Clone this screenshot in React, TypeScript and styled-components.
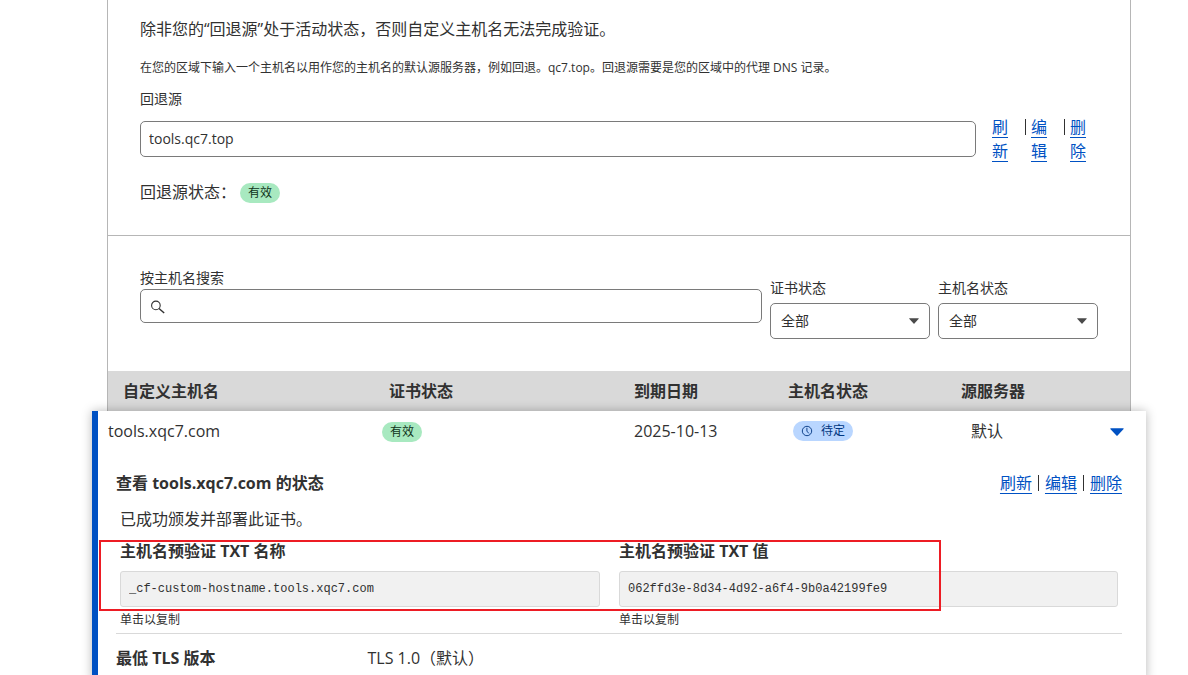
import React from "react";
import styled, { createGlobalStyle } from "styled-components";

const color = {
  text: "#313131",
  link: "#0051c3",
  cardBorder: "#b6b6b6",
  controlBorder: "#7a7a7a",
  rule: "#d9d9d9",
  headBg: "#d9d9d9",
  fieldBg: "#f1f1f1",
  mark: "#ed1c24",
};

const GlobalStyle = createGlobalStyle`
  *, *::before, *::after { box-sizing: border-box; }
  body {
    margin: 0;
    background: #fff;
    color: ${color.text};
    font-family: "Open Sans", "Noto Sans CJK SC", sans-serif;
    font-size: 16px;
    line-height: 24px;
  }
  input, select, button { font: inherit; color: inherit; }
`;

const Page = styled.div`
  height: 100vh;
  overflow: hidden;
  padding: 0 57px 0 107px;
`;

const Card = styled.main`
  min-height: 100%;
  border: solid ${color.cardBorder};
  border-width: 0 1px;
`;

const OriginSection = styled.section`
  padding: 17px 32px 31px;
  border-bottom: 1px solid ${color.cardBorder};
`;

const Lead = styled.p`
  margin: 0 0 18px;
`;

const Hint = styled.p`
  margin: 0 0 12px;
  font-size: 12px;
  line-height: 18px;
`;

const Label = styled.label<{ $gap?: number }>`
  display: block;
  margin-bottom: ${(p) => p.$gap ?? 0}px;
  font-size: 14px;
  line-height: 20px;
`;

const OriginRow = styled.div`
  display: flex;
  align-items: center;
  gap: 16px;
  margin-bottom: 17px;
`;

const TextInput = styled.input`
  flex: 1;
  min-width: 0;
  height: 36px;
  padding: 0 8px 2px;
  border: 1px solid ${color.controlBorder};
  border-radius: 5px;
  background: #fff;
  font-size: 14px;
`;

const StackedLinks = styled.div`
  display: flex;
  gap: 5px;
  width: 106px;
`;

const StackedItem = styled.span`
  display: flex;
  gap: 17px;
`;

const StackedText = styled.span`
  width: 16px;
`;

const Link = styled.a`
  color: ${color.link};
  text-decoration: underline;
  text-decoration-thickness: 1px;
  text-underline-offset: 4px;
  text-decoration-skip-ink: none;
`;

const Bar = styled.i`
  flex: none;
  width: 1px;
  height: 16px;
  margin-top: 4px;
  background: ${color.text};
`;

const StatusLine = styled.div`
  display: flex;
  align-items: center;
  gap: 4px;
`;

const Badge = styled.span<{ $tone: "ok" | "pending" }>`
  display: inline-flex;
  align-items: center;
  gap: 8px;
  height: 20px;
  margin-top: ${(p) => (p.$tone === "ok" ? 2 : 0)}px;
  padding: 0 8px;
  border-radius: 10px;
  font-size: 12px;
  line-height: 20px;
  background: ${(p) => (p.$tone === "ok" ? "#a8e9c0" : "#b9d6ff")};
  color: ${(p) => (p.$tone === "ok" ? "#0f3319" : "#003681")};
`;

const FilterSection = styled.section`
  display: flex;
  align-items: flex-start;
  gap: 8px;
  padding: 32px;
`;

const SearchField = styled.div`
  flex: 1;
  min-width: 0;
`;

const SearchBox = styled.div`
  display: flex;
  align-items: center;
  gap: 8px;
  height: 34px;
  padding: 2px 9px 0;
  border: 1px solid ${color.controlBorder};
  border-radius: 5px;
  svg { flex: none; }
`;

const SearchInput = styled.input`
  flex: 1;
  min-width: 0;
  border: 0;
  outline: 0;
  background: transparent;
  font-size: 14px;
`;

const SelectField = styled.div`
  width: 160px;
  padding-top: 10px;
`;

const SelectBox = styled.div`
  display: grid;
  align-items: center;
  > * { grid-area: 1 / 1; }
  svg {
    justify-self: end;
    margin-right: 11px;
    pointer-events: none;
  }
`;

const Select = styled.select`
  width: 100%;
  height: 36px;
  padding: 0 10px;
  border: 1px solid ${color.controlBorder};
  border-radius: 5px;
  appearance: none;
  background: #fff;
  font-size: 14px;
`;

const HostTable = styled.table`
  display: block;
`;

const Head = styled.thead`
  display: block;
  background: ${color.headBg};
`;

const HeadRow = styled.tr`
  display: grid;
  grid-template-columns: 266fr 245fr 154fr 173fr 169fr;
  padding-left: 15px;
`;

const HeadCell = styled.th`
  padding: 8px 0;
  text-align: left;
  font-weight: 700;
`;

const Panel = styled.tbody`
  display: block;
  position: relative;
  margin: 0 -16px;
  border-left: 6px solid ${color.link};
  background: #fff;
  box-shadow: 0 0 10px rgba(0, 0, 0, 0.28);
`;

const HostRow = styled.tr`
  display: grid;
  grid-template-columns: 274fr 252fr 159fr 178fr 135fr 40px;
  align-items: center;
  height: 40px;
  padding-left: 10px;
`;

const Cell = styled.td`
  display: flex;
  align-items: center;
  padding: 0;
`;

const ToggleButton = styled.button`
  display: flex;
  padding: 6px 4px 4px;
  border: 0;
  background: none;
  cursor: pointer;
`;

const DetailRow = styled.tr`
  display: block;
`;

const Detail = styled.td`
  display: block;
  padding: 20px 24px 12px 18px;
`;

const DetailHead = styled.div`
  display: flex;
  justify-content: space-between;
  margin-bottom: 12px;
`;

const Title = styled.h3`
  margin: 0;
  font-size: 16px;
  font-weight: 700;
`;

const InlineLinks = styled.div`
  display: flex;
  gap: 6px;
`;

const Issued = styled.p`
  margin: 0 4px 8px;
`;

const Records = styled.div`
  position: relative;
  display: grid;
  grid-template-columns: 1fr 1fr;
  margin: 0 4px 4px;
`;

const Highlight = styled.div`
  position: absolute;
  top: 1px;
  left: -21px;
  right: 177px;
  height: 71px;
  border: 2px solid ${color.mark};
  pointer-events: none;
`;

const Record = styled.div<{ $inset?: number }>`
  padding-right: ${(p) => p.$inset ?? 0}px;
`;

const RecordLabel = styled.label`
  display: block;
  margin-bottom: 8px;
  font-weight: 700;
`;

const RecordInput = styled.input`
  display: block;
  width: 100%;
  height: 36px;
  margin-bottom: 4px;
  padding: 0 8px;
  border: 1px solid ${color.rule};
  border-radius: 3px;
  background: ${color.fieldBg};
  && {
    font-family: "Liberation Mono", monospace;
    font-size: 12px;
  }
`;

const CopyHint = styled.small`
  display: block;
  font-size: 12px;
  line-height: 18px;
`;

const SettingRow = styled.div`
  display: grid;
  grid-template-columns: 1fr 3fr;
  padding-top: 12px;
  border-top: 1px solid ${color.rule};
`;

const SearchIcon = () => (
  <svg width="16" height="16" viewBox="0 0 16 16" fill="none" stroke="#313131" aria-hidden="true">
    <circle cx="5.9" cy="6.4" r="4.3" strokeWidth="1.1" />
    <path d="M9 9.4l5.2 4.6" strokeWidth="1.4" />
  </svg>
);

const Caret = ({ width, height, fill }: { width: number; height: number; fill: string }) => (
  <svg width={width} height={height} viewBox="0 0 14 8" preserveAspectRatio="none" fill={fill} aria-hidden="true">
    <path d="M0.3 1Q0 0.3 0.9 0.3H13.1Q14 0.3 13.6 1L7.6 7.4Q7 8 6.4 7.4Z" />
  </svg>
);

const ClockIcon = () => (
  <svg width="12" height="12" viewBox="0 0 12 12" fill="none" stroke="#003681" strokeWidth="0.9" aria-hidden="true">
    <circle cx="6" cy="6" r="4.7" />
    <path d="M5.9 2.8v3.3l1.9 2.3" />
  </svg>
);

const actions = ["刷新", "编辑", "删除"];
const columns = ["自定义主机名", "证书状态", "到期日期", "主机名状态", "源服务器"];
const filters = [
  { id: "cert-status", label: "证书状态" },
  { id: "host-status", label: "主机名状态" },
];
const records = [
  { id: "txt-name", label: "主机名预验证 TXT 名称", value: "_cf-custom-hostname.tools.xqc7.com", inset: 19 },
  { id: "txt-value", label: "主机名预验证 TXT 值", value: "062ffd3e-8d34-4d92-a6f4-9b0a42199fe9", inset: 0 },
];

export default function App() {
  return (
    <Page>
      <GlobalStyle />
      <Card>
        <OriginSection>
          <Lead>除非您的“回退源”处于活动状态，否则自定义主机名无法完成验证。</Lead>
          <Hint>
            在您的区域下输入一个主机名以用作您的主机名的默认源服务器，例如回退。qc7.top。回退源需要是您的区域中的代理 DNS 记录。
          </Hint>
          <Label htmlFor="origin" $gap={6}>回退源</Label>
          <OriginRow>
            <TextInput id="origin" defaultValue="tools.qc7.top" />
            <StackedLinks>
              {actions.map((a, i) => (
                <StackedItem key={a}>
                  <StackedText><Link href="#">{a}</Link></StackedText>
                  {i < actions.length - 1 && <Bar />}
                </StackedItem>
              ))}
            </StackedLinks>
          </OriginRow>
          <StatusLine>
            回退源状态：<Badge $tone="ok">有效</Badge>
          </StatusLine>
        </OriginSection>

        <FilterSection>
          <SearchField>
            <Label htmlFor="search" $gap={1}>按主机名搜索</Label>
            <SearchBox>
              <SearchIcon />
              <SearchInput id="search" type="text" />
            </SearchBox>
          </SearchField>
          {filters.map((f) => (
            <SelectField key={f.id}>
              <Label htmlFor={f.id} $gap={5}>{f.label}</Label>
              <SelectBox>
                <Select id={f.id}>
                  <option>全部</option>
                </Select>
                <Caret width={10} height={6} fill="#4a4a4a" />
              </SelectBox>
            </SelectField>
          ))}
        </FilterSection>

        <HostTable>
          <Head>
            <HeadRow>
              {columns.map((c) => <HeadCell key={c}>{c}</HeadCell>)}
            </HeadRow>
          </Head>
          <Panel>
            <HostRow>
              <Cell>tools.xqc7.com</Cell>
              <Cell><Badge $tone="ok">有效</Badge></Cell>
              <Cell>2025-10-13</Cell>
              <Cell><Badge $tone="pending"><ClockIcon />待定</Badge></Cell>
              <Cell>默认</Cell>
              <Cell>
                <ToggleButton aria-label="收起"><Caret width={14} height={8} fill={color.link} /></ToggleButton>
              </Cell>
            </HostRow>
            <DetailRow>
              <Detail>
                <DetailHead>
                  <Title>查看 tools.xqc7.com 的状态</Title>
                  <InlineLinks>
                    {actions.map((a, i) => (
                      <React.Fragment key={a}>
                        {i > 0 && <Bar />}
                        <Link href="#">{a}</Link>
                      </React.Fragment>
                    ))}
                  </InlineLinks>
                </DetailHead>
                <Issued>已成功颁发并部署此证书。</Issued>
                <Records>
                  {records.map((r) => (
                    <Record key={r.id} $inset={r.inset}>
                      <RecordLabel htmlFor={r.id}>{r.label}</RecordLabel>
                      <RecordInput id={r.id} readOnly value={r.value} />
                      <CopyHint>单击以复制</CopyHint>
                    </Record>
                  ))}
                  <Highlight />
                </Records>
                <SettingRow>
                  <Title>最低 TLS 版本</Title>
                  <span>TLS 1.0（默认）</span>
                </SettingRow>
              </Detail>
            </DetailRow>
          </Panel>
        </HostTable>
      </Card>
    </Page>
  );
}
